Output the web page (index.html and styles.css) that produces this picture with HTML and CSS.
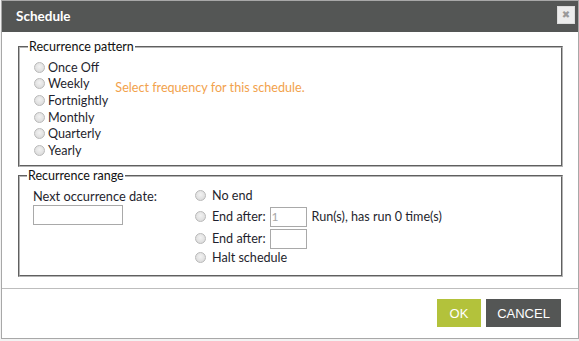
FILE: index.html
```html
<!DOCTYPE html>
<html>
<head>
  <title>Schedule</title>
  <meta name="viewport" content="width=device-width, initial-scale=1.0">
  <link rel="stylesheet" href="styles.css">
</head>
<body>
  <div class='dialog'>
    <div class='dialog-title'>
      <span class='title-text'>Schedule</span>
      <button class='close-btn' type='button'>&#x2716;</button>
    </div>
    <form class='dialog-body'>
      <fieldset class='pattern'>
        <legend>Recurrence pattern</legend>
        <div class='options'>
          <label class='row'><input type='radio' name='freq'>Once Off</label>
          <label class='row'><input type='radio' name='freq'>Weekly</label>
          <label class='row'><input type='radio' name='freq'>Fortnightly</label>
          <label class='row'><input type='radio' name='freq'>Monthly</label>
          <label class='row'><input type='radio' name='freq'>Quarterly</label>
          <label class='row'><input type='radio' name='freq'>Yearly</label>
        </div>
        <div class='hint'>Select frequency for this schedule.</div>
      </fieldset>
      <fieldset class='range'>
        <legend>Recurrence range</legend>
        <div class='next-date'>
          <label>Next occurrence date:</label>
          <input class='date-input' type='text'>
        </div>
        <div class='end-options'>
          <label class='row first'><input type='radio' name='end'>No end</label>
          <label class='row tall'><input type='radio' name='end'>End after:<input class='count-input' type='text' value='1'><span class='runs'>Run(s), has run 0 time(s)</span></label>
          <label class='row tall'><input type='radio' name='end'>End after:<input class='count-input' type='text'></label>
          <label class='row'><input type='radio' name='end'>Halt schedule</label>
        </div>
      </fieldset>
    </form>
    <div class='dialog-footer'>
      <button class='btn btn-ok' type='button'>OK</button>
      <button class='btn btn-cancel' type='button'>CANCEL</button>
    </div>
  </div>
</body>
</html>
```

FILE: styles.css
```css
body {
  margin: 0;
  padding: 0;
  background-color: #f3f3f3;
  font-family: Lato, "Open Sans", sans-serif;
  color: #1f1f2e;
}
.dialog {
  margin-left: 1px;
  width: 576px;
  height: 337px;
  border: 1px solid #a8a8a8;
  background-color: #fff;
  display: flex;
  flex-direction: column;
}
.dialog-title {
  height: 31px;
  background-color: #545655;
  display: flex;
  align-items: center;
  justify-content: space-between;
  padding: 0 3px 0 14px;
}
.title-text {
  color: #fff;
  font-weight: bold;
  font-size: 13.5px;
  padding-bottom: 1px;
}
.close-btn {
  width: 18px;
  height: 18px;
  margin-bottom: 3px;
  padding: 0;
  border: 1px solid #dcdcdc;
  background-color: #ececec;
  color: #9a9a9a;
  font-size: 10px;
  line-height: 16px;
  text-align: center;
  font-family: "DejaVu Sans", sans-serif;
}
.dialog-body {
  flex: 1;
  padding: 8px 15px 0 16px;
  margin: 0;
}
fieldset {
  margin: 0;
  border: 2px groove #b4b4b4;
  padding: 0 12px 0 14px;
  display: flex;
}
legend {
  font-size: 12.5px;
  padding: 0 1px;
  margin-left: -6px;
  line-height: 14px;
  color: #111;
}
.row {
  display: flex;
  align-items: center;
  font-size: 12.6px;
  height: 16.6px;
  white-space: nowrap;
}
input[type='radio'] {
  -webkit-appearance: none;
  appearance: none;
  width: 11px;
  height: 11px;
  margin: 0 3px 0 0;
  border-radius: 50%;
  border: 1px solid #b9b9b9;
  background: radial-gradient(circle at 50% 40%, #f2f2f2, #d6d6d6);
  flex: none;
}
.pattern {
  padding-top: 5px;
  padding-bottom: 6px;
}
.hint {
  color: #f2a24c;
  font-size: 12.6px;
  margin: 21px 0 0 7px;
}
.range {
  margin-top: 2px;
  padding-top: 3px;
  padding-bottom: 9px;
  padding-left: 13px;
}
.next-date {
  width: 162px;
  padding-top: 2px;
  font-size: 12.8px;
  display: flex;
  flex-direction: column;
  align-items: flex-start;
  gap: 1px;
}
.date-input {
  width: 88px;
  height: 18px;
  margin: 0;
  padding: 0;
  border: 1px solid #a9a9a9;
}
.end-options {
  display: flex;
  flex-direction: column;
}
.end-options input[type='radio'] {
  margin-right: 6px;
}
.row.first {
  height: 20px;
}
.row.tall {
  height: 22px;
}
.count-input {
  width: 33px;
  height: 18px;
  margin: 0 0 0 4px;
  padding: 0 1px;
  border: 1px solid #a9a9a9;
  font-family: Lato, sans-serif;
  font-size: 12px;
  color: #a8a8a8;
}
.runs {
  margin-left: 5px;
}
.dialog-footer {
  border-top: 1px solid #bdbdbd;
  display: flex;
  justify-content: flex-end;
  gap: 5px;
  padding: 10px 17px 11px 0;
}
.btn {
  height: 28px;
  border: 0;
  padding: 0;
  color: #fff;
  font-family: "Liberation Sans", Arial, sans-serif;
  font-size: 13px;
}
.btn-ok {
  width: 44px;
  background-color: #b3c23b;
}
.btn-cancel {
  width: 75px;
  background-color: #545655;
}
```
